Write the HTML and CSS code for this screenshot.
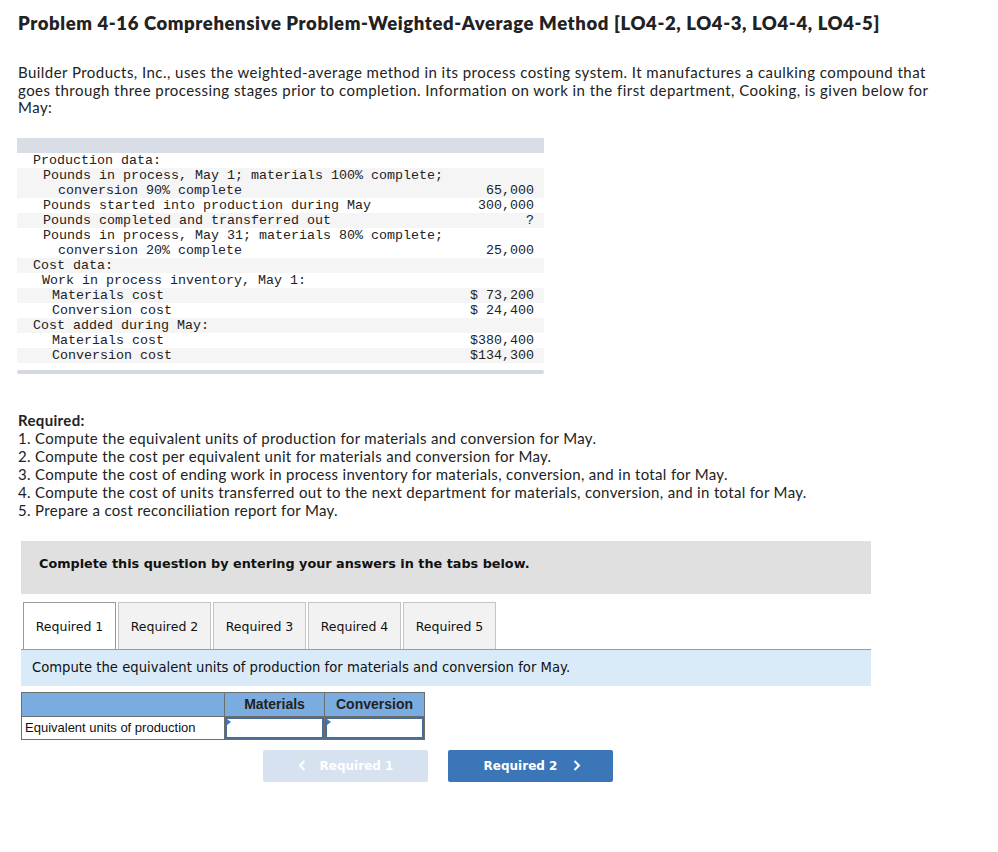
FILE: index.html
```html
<!DOCTYPE html>
<html>
<head>
<meta charset="utf-8">
<link rel="stylesheet" href="styles.css">
</head>
<body>
<div class="page">
  <h1 class="title">Problem 4-16 Comprehensive Problem-Weighted-Average Method [LO4-2, LO4-3, LO4-4, LO4-5]</h1>
  <p class="intro">Builder Products, Inc., uses the weighted-average method in its process costing system. It manufactures a caulking compound that goes through three processing stages prior to completion. Information on work in the first department, Cooking, is given below for May:</p>

  <div class="data">
    <div class="data-head"></div>
    <div class="row"><span class="lbl i0">Production data:</span><span class="val"></span></div>
    <div class="row alt"><span class="lbl i1">Pounds in process, May 1; materials 100% complete;<br><span class="i2">conversion 90% complete</span></span><span class="val"><br>65,000</span></div>
    <div class="row"><span class="lbl i1">Pounds started into production during May</span><span class="val">300,000</span></div>
    <div class="row alt"><span class="lbl i1">Pounds completed and transferred out</span><span class="val">?</span></div>
    <div class="row"><span class="lbl i1">Pounds in process, May 31; materials 80% complete;<br><span class="i2">conversion 20% complete</span></span><span class="val"><br>25,000</span></div>
    <div class="row alt"><span class="lbl i0">Cost data:</span><span class="val"></span></div>
    <div class="row"><span class="lbl i1b">Work in process inventory, May 1:</span><span class="val"></span></div>
    <div class="row alt"><span class="lbl i3">Materials cost</span><span class="val">$ 73,200</span></div>
    <div class="row"><span class="lbl i3">Conversion cost</span><span class="val">$ 24,400</span></div>
    <div class="row alt"><span class="lbl i0">Cost added during May:</span><span class="val"></span></div>
    <div class="row"><span class="lbl i3">Materials cost</span><span class="val">$380,400</span></div>
    <div class="row alt"><span class="lbl i3">Conversion cost</span><span class="val">$134,300</span></div>
    <div class="data-foot"></div>
  </div>

  <div class="required">
    <div class="req-title">Required:</div>
    <div>1. Compute the equivalent units of production for materials and conversion for May.</div>
    <div>2. Compute the cost per equivalent unit for materials and conversion for May.</div>
    <div>3. Compute the cost of ending work in process inventory for materials, conversion, and in total for May.</div>
    <div>4. Compute the cost of units transferred out to the next department for materials, conversion, and in total for May.</div>
    <div>5. Prepare a cost reconciliation report for May.</div>
  </div>

  <div class="answer">
    <div class="banner">Complete this question by entering your answers in the tabs below.</div>
    <div class="tabs">
      <div class="tab active">Required 1</div>
      <div class="tab">Required 2</div>
      <div class="tab">Required 3</div>
      <div class="tab">Required 4</div>
      <div class="tab">Required 5</div>
    </div>
    <div class="instr">Compute the equivalent units of production for materials and conversion for May.</div>
    <table class="grid">
      <tr class="ghead"><th class="c-lbl"></th><th>Materials</th><th>Conversion</th></tr>
      <tr><td class="c-lbl">Equivalent units of production</td><td class="inp"><span class="flag"></span></td><td class="inp"><span class="flag"></span></td></tr>
    </table>
    <div class="nav">
      <div class="btn prev"><svg class="chev" width="8" height="11" viewBox="0 0 8 11"><path d="M6.5 1 L2 5.5 L6.5 10" fill="none" stroke="#fff" stroke-width="2"/></svg><span>Required 1</span></div>
      <div class="btn next"><span>Required 2</span><svg class="chev" width="8" height="11" viewBox="0 0 8 11"><path d="M1.5 1 L6 5.5 L1.5 10" fill="none" stroke="#fff" stroke-width="2"/></svg></div>
    </div>
  </div>
</div>
</body>
</html>
```
FILE: styles.css
```css
* { box-sizing: border-box; }
body { margin: 0; background: #fff; color: #222; }
.page { padding: 12px 0 0 18px; width: 998px; }
.title {
  font-family: "Lato", "Open Sans", sans-serif;
  font-weight: 800;
  font-size: 18.5px;
  letter-spacing: 0.6px;
  margin: 0;
  line-height: 22px;
  color: #222;
}
.intro {
  font-family: "Lato", "Open Sans", sans-serif;
  font-size: 15px;
  letter-spacing: 0.45px;
  line-height: 17.5px;
  margin: 30px 0 0 0;
  width: 930px;
  color: #222;
}
.data {
  margin: 21px 0 0 -1px;
  width: 527px;
  font-family: "Liberation Mono", "Courier New", monospace;
  font-size: 13.33px;
  line-height: 15px;
  color: #222;
}
.data-head { height: 15px; background: #d9dde6; }
.row { display: flex; justify-content: space-between; background: #fff; }
.row.alt { background: #f5f5f5; }
.lbl { white-space: pre; }
.val { text-align: right; padding-right: 10px; white-space: nowrap; }
.i0 { padding-left: 16px; }
.i1 { padding-left: 26px; }
.i1b { padding-left: 25px; }
.i2 { padding-left: 15px; }
.i3 { padding-left: 35px; }
.data-foot { height: 4px; background: #d5d9e2; border-radius: 2px; margin-top: 7px; }

.required {
  margin-top: 37px;
  font-family: "Lato", "Open Sans", sans-serif;
  font-size: 15px;
  letter-spacing: 0.33px;
  line-height: 18px;
  color: #222;
}
.req-title { font-weight: 700; }

.answer { margin: 22px 0 0 3px; width: 850px; font-family: "DejaVu Sans", Verdana, sans-serif; }
.banner {
  background: #e0e0e0;
  height: 53px;
  padding: 14px 0 0 18px;
  font-weight: 700;
  font-size: 12.8px;
  line-height: 17px;
  color: #111;
}
.tabs { display: flex; gap: 2px; margin-top: 8px; padding-left: 2px; border-bottom: 1px solid #9a9a9a; }
.tab {
  width: 93px;
  height: 47px;
  background: #f2f2f2;
  border: 1px solid #c4c4c4;
  border-bottom: none;
  font-size: 12.5px;
  line-height: 47px;
  text-align: center;
  color: #111;
}
.tab.active { background: #fff; border-color: #9a9a9a; }
.instr {
  background: #d9ebf9;
  height: 36px;
  padding-left: 11px;
  font-size: 13.2px;
  line-height: 36px;
  color: #111;
}
.grid {
  margin-top: 6px;
  border-collapse: collapse;
  font-family: "Liberation Sans", Arial, sans-serif;
}
.grid th, .grid td { border: 1px solid #6e6e6e; padding: 0; }
.ghead th {
  background: #7aacdf;
  height: 24px;
  font-size: 14px;
  font-weight: 700;
  color: #222;
  text-align: center;
  width: 100px;
}
.grid .c-lbl { width: 203px; }
.grid td { height: 23px; font-size: 13px; color: #111; }
.grid td.c-lbl { padding-left: 3px; }
.grid td.inp { position: relative; box-shadow: inset 0 0 0 2px #4a6d98; }
.flag {
  position: absolute; left: 2px; top: 2px;
  width: 0; height: 0;
  border-top: 3px solid transparent;
  border-bottom: 3px solid transparent;
  border-left: 4px solid #3c78c4;
}
.nav { display: flex; gap: 20px; margin: 10px 0 0 242px; }
.btn {
  width: 165px;
  height: 32px;
  border-radius: 2px;
  font-weight: 700;
  font-size: 12px;
  display: flex;
  align-items: center;
  justify-content: center;
  gap: 14px;
  color: #fff;
  font-family: "DejaVu Sans", Verdana, sans-serif;
}
.btn.prev { background: #d6e2f0; }
.btn.next { background: #3b76b9; gap: 16px; padding-left: 4px; }
.chev { display: block; }
```
